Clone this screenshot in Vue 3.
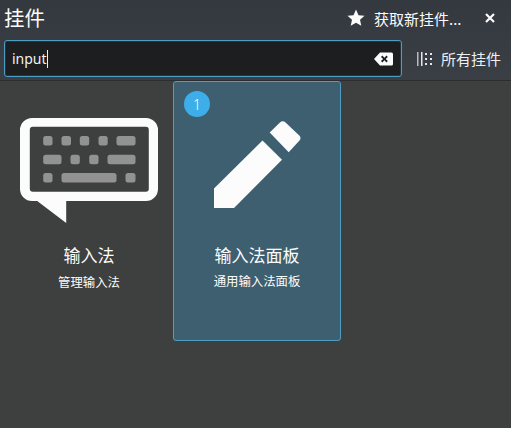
<script setup>
const rows = [
  { y: 136, keys: [[42.7, 9.3], [61, 9.5], [79.3, 9.4], [98, 9.2], [116, 19]] },
  { y: 154.7, keys: [[42.7, 18.3], [70, 9.3], [88.7, 9.3], [107, 28]] },
  { y: 173, keys: [[42.7, 9.3], [61, 55], [125, 10]] }
]
const keys = rows.flatMap((r) => r.keys.map(([x, w]) => ({ x: x - 19.5, y: r.y - 118, w })))
</script>

<template>
  <div class="root">
    <header class="head">
      <div class="top">
        <h1 class="title">挂件</h1>
        <div class="actions">
          <svg class="star" width="18" height="18" viewBox="0 0 18 18"><path d="M9 0.6l2.5 5.6 6 .6-4.500 4 1.300 6L9 13.700l-5.300 3.100 1.300-6-4.500-4 6-.6z" fill="#fcfcfc"/></svg>
          <span class="get">获取新挂件...</span>
          <svg class="close" width="10" height="10" viewBox="0 0 10 10"><path d="M1 1l8 8M9 1l-8 8" stroke="#fcfcfc" stroke-width="2.200"/></svg>
        </div>
      </div>
      <div class="bottom">
        <div class="search">
          <span class="value">input</span><span class="caret"></span>
          <svg class="clear" width="19" height="14" viewBox="0 0 19 14"><path fill-rule="evenodd" d="M6 0.5h11.500a1.500 1.500 0 0 1 1.500 1.500v10a1.500 1.500 0 0 1-1.500 1.500H6L0 7zM8.300 3.600L7 4.900 9.100 7 7 9.100l1.300 1.300 2.100-2.100 2.100 2.100 1.300-1.300L11.700 7l2.100-2.100-1.300-1.300-2.100 2.100z" fill="#fcfcfc"/></svg>
        </div>
        <div class="all">
          <svg width="16" height="14" viewBox="0 0 16 14" class="grid-icon"><g fill="#e4e6e8"><rect x="0" y="0" width="1.500" height="14" opacity=".75"/><rect x="4" y="0" width="1.500" height="14" /><rect x="8" y="1" width="2" height="2"/><rect x="13" y="1" width="2" height="2"/><rect x="8" y="6" width="2" height="2"/><rect x="13" y="6" width="2" height="2"/><rect x="8" y="11" width="2" height="2"/><rect x="13" y="11" width="2" height="2"/></g></svg>
          <span>所有挂件</span>
        </div>
      </div>
    </header>
    <main class="list">
      <section class="card">
        <div class="icon">
          <svg width="138" height="105" viewBox="0 0 138 105">
            <path fill="#fcfcfc" d="M12 0H126a12 12 0 0 1 12 12V71a12 12 0 0 1-12 12H46.200V105L17.200 83H12A12 12 0 0 1 0 71V12A12 12 0 0 1 12 0Z"/>
            <rect x="9.800" y="8.700" width="119" height="65" rx="3" fill="#3e403f"/>
            <rect v-for="(k, i) in keys" :key="i" :x="k.x" :y="k.y" :width="k.w" height="9.500" rx="2.500" fill="#929292"/>
          </svg>
        </div>
        <div class="name">输入法</div>
        <div class="desc">管理输入法</div>
      </section>
      <section class="card active">
        <span class="badge">1</span>
        <div class="icon">
          <svg width="88" height="88" viewBox="0 0 88 88">
            <path fill="#fcfcfc" d="M0 68.500L48.500 20.500L68 39.800L20 88H0Z"/>
            <path fill="#fcfcfc" d="M55.700 12.500L65.700 2.700Q68.800 0 71.800 2.800L85 15.300Q87.800 18 85.500 20.500L74.700 32.200Z"/>
          </svg>
        </div>
        <div class="name">输入法面板</div>
        <div class="desc">通用输入法面板</div>
      </section>
    </main>
  </div>
</template>

<style>
html, body { margin: 0; background: #3e403f; }
</style>

<style scoped>
.root {
  width: 511px;
  height: 428px;
  overflow: hidden;
  display: flex;
  flex-direction: column;
  color: #fcfcfc;
  font-family: "Noto Sans", "Noto Sans CJK SC", sans-serif;
  background: #3e403f;
}
.head {
  height: 81px;
  box-sizing: border-box;
  padding: 0 10px 0 4px;
  background: linear-gradient(#34383f, #3a3e45);
  border-bottom: 1px solid #2b2d30;
  display: flex;
  flex-direction: column;
}
.top {
  height: 40px;
  display: flex;
  align-items: flex-start;
  justify-content: space-between;
}
.title {
  margin: 0;
  font-size: 20.500px;
  font-weight: 400;
  line-height: 35px;
  font-family: "Noto Sans CJK SC", sans-serif;
}
.actions {
  display: flex;
  align-items: center;
  height: 36px;
  margin-right: 6px;
}
.get {
  font-size: 15px;
  margin-left: 9px;
  width: 90px;
  white-space: nowrap;
  font-family: "Noto Sans CJK SC", sans-serif;
}
.close { margin-left: 21px; }
.bottom {
  display: flex;
  align-items: center;
}
.search {
  width: 399px;
  height: 37px;
  box-sizing: border-box;
  display: flex;
  align-items: center;
  padding: 0 8px 0 7px;
  background: #1c1e20;
  border: 1px solid #4f9dc2;
  box-shadow: inset 0 0 0 1px rgba(79, 157, 194, 0.18);
  border-radius: 3px;
}
.value { font-size: 14px; color: #eff0f1; }
.caret { width: 1px; height: 18px; background: #eff0f1; }
.clear { margin-left: auto; }
.all {
  margin-left: 15px;
  display: flex;
  align-items: center;
  font-size: 15px;
  color: #eff0f1;
  white-space: nowrap;
  font-family: "Noto Sans CJK SC", sans-serif;
}
.grid-icon { margin-right: 8px; }
.list {
  flex: 1;
  display: flex;
  align-items: flex-start;
  padding-left: 5px;
}
.card {
  position: relative;
  width: 168px;
  height: 260px;
  box-sizing: border-box;
  display: flex;
  flex-direction: column;
  align-items: center;
  font-family: "Noto Sans CJK SC", sans-serif;
}
.card.active {
  background: #3e5f70;
  border: 1px solid #4f9dc2;
  border-radius: 3px;
}
.icon {
  height: 105px;
  margin-top: 37px;
  display: flex;
  align-items: flex-start;
}
.card.active .icon { margin-top: 38px; margin-left: 1px; }
.name { margin-top: 20px; font-size: 17px; line-height: 24px; }
.card.active .name { margin-top: 18px; }
.desc { margin-top: 6px; font-size: 12.400px; line-height: 18px; }
.card.active .desc { margin-top: 5px; }
.badge {
  position: absolute;
  left: 10px;
  top: 9px;
  width: 26px;
  height: 26px;
  border-radius: 50%;
  background: #3daee9;
  display: flex;
  align-items: center;
  justify-content: center;
  font-size: 14px;
  font-weight: 300;
  font-family: "Noto Sans", sans-serif;
}
</style>
